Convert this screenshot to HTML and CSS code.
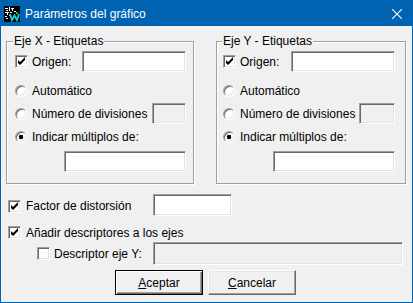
FILE: index.html
```html
<!DOCTYPE html>
<html lang="es">
<head>
  <meta charset="UTF-8">
  <meta name="viewport" content="width=device-width, initial-scale=1.0">
  <title>Parámetros del gráfico</title>
<link rel="stylesheet" href="styles.css">
</head>
<body>
  <div class="window">
    <div class="titlebar">
      <svg class="app-icon" width="16" height="16" viewBox="0 0 16 16">
        <rect width="16" height="16" fill="#000"/>
        <path d="M1 2h3v1H1zM5 1h1v4H5zM2 4h2v1H2zM7 2h3v1H7zM8 3h1v2H8zM1 6h4v1H1zM3 7h1v2H3zM6 6h2v1H6zM10 5h2v1h-2zM1 10h2v1H1zM2 12h2v1H2zM5 9h1v1H5z" fill="#fff"/>
        <path d="M6 8l2 6 2.5-4.5L13 14l2-6" fill="none" stroke="#19c8d2" stroke-width="2"/>
        <path d="M12 6h2v2h-2z" fill="#2fb84a"/>
      </svg>
      <span class="title">Parámetros del gráfico</span>
      <svg class="close" width="10" height="10" viewBox="0 0 10 10">
        <path d="M0 0L10 10M10 0L0 10" stroke="#fff" stroke-width="1.1"/>
      </svg>
    </div>

    <div class="client">
      <div class="groups">
        <div class="group group-x">
          <div class="caption">Eje X - Etiquetas</div>
          <div class="row row-origin">
            <span class="chk"><svg viewBox="1 1 11 11" width="11" height="11"><path d="M3 5L5 7L10 2V5L5 10L3 8Z" fill="#000"/></svg></span>
            <span class="lbl">Origen:</span>
            <input type="text" class="field w-origin">
          </div>
          <div class="row row-auto">
            <span class="radio"></span>
            <span class="lbl">Automático</span>
          </div>
          <div class="row row-div">
            <span class="radio"></span>
            <span class="lbl">Número de divisiones</span>
            <input type="text" class="field w-small" disabled>
          </div>
          <div class="row row-mult">
            <span class="radio on"></span>
            <span class="lbl">Indicar múltiplos de:</span>
          </div>
          <div class="row row-value">
            <input type="text" class="field w-wide">
          </div>
        </div>

        <div class="group group-y">
          <div class="caption">Eje Y - Etiquetas</div>
          <div class="row row-origin">
            <span class="chk"><svg viewBox="1 1 11 11" width="11" height="11"><path d="M3 5L5 7L10 2V5L5 10L3 8Z" fill="#000"/></svg></span>
            <span class="lbl">Origen:</span>
            <input type="text" class="field w-origin">
          </div>
          <div class="row row-auto">
            <span class="radio"></span>
            <span class="lbl">Automático</span>
          </div>
          <div class="row row-div">
            <span class="radio"></span>
            <span class="lbl">Número de divisiones</span>
            <input type="text" class="field w-small-y" disabled>
          </div>
          <div class="row row-mult">
            <span class="radio on"></span>
            <span class="lbl">Indicar múltiplos de:</span>
          </div>
          <div class="row row-value">
            <input type="text" class="field w-wide">
          </div>
        </div>
      </div>

      <div class="options">
        <div class="row opt-factor">
          <div class="opt-label">
            <span class="chk"><svg viewBox="1 1 11 11" width="11" height="11"><path d="M3 5L5 7L10 2V5L5 10L3 8Z" fill="#000"/></svg></span>
            <span class="lbl">Factor de distorsión</span>
          </div>
          <input type="text" class="field w-factor">
        </div>
        <div class="row opt-axes">
          <span class="chk"><svg viewBox="1 1 11 11" width="11" height="11"><path d="M3 5L5 7L10 2V5L5 10L3 8Z" fill="#000"/></svg></span>
          <span class="lbl">Añadir descriptores a los ejes</span>
        </div>
        <div class="row opt-desc">
          <div class="desc-label">
            <span class="chk"></span>
            <span class="lbl">Descriptor eje Y:</span>
          </div>
          <input type="text" class="field w-desc" disabled>
        </div>
      </div>

      <div class="buttons">
        <button type="button" class="btn btn-default"><u>A</u>ceptar</button>
        <button type="button" class="btn"><u>C</u>ancelar</button>
      </div>
    </div>
  </div>
</body>
</html>
```

FILE: styles.css
```css
body {
  margin: 0;
  font-family: "Liberation Sans", Arial, sans-serif;
  font-size: 12px;
  color: #000;
}

.window {
  width: 413px;
  height: 303px;
  box-sizing: border-box;
  border: 1px solid #0063b1;
  display: flex;
  flex-direction: column;
  background-color: #f0f0f0;
}

/* title bar */
.titlebar {
  flex: none;
  height: 25px;
  background-color: #0063b1;
  color: #fff;
  display: flex;
  align-items: center;
  padding-left: 3px;
}

.app-icon {
  display: block;
  margin-top: 1px;
}

.title {
  margin-left: 5px;
  font-size: 12px;
}

.close {
  display: block;
  margin-left: auto;
  margin-right: 10px;
}

.client {
  flex: 1;
  background-color: #f0f0f0;
}

/* group boxes */
.groups {
  display: flex;
  gap: 22px;
  padding-left: 5px;
}

.group {
  margin-top: 15px;
  height: 143px;
  box-sizing: border-box;
  border: 1px solid #a0a0a0;
  box-shadow: inset 1px 1px 0 #fff, 1px 1px 0 #fff;
}

.group-x {
  width: 188px;
  padding: 0 7px 0 8px;
}

.group-y {
  width: 190px;
  padding: 0 10px 0 6px;
}

.caption {
  width: fit-content;
  margin: -8px 0 0 -1px;
  padding: 0 1px;
  line-height: 14px;
  background-color: #f0f0f0;
}

.group-x .caption {
  margin-left: -2px;
}

.row {
  display: flex;
  align-items: center;
}

.lbl {
  white-space: nowrap;
}

.row-origin {
  margin-top: 3px;
  height: 21px;
}

.row-auto {
  margin-top: 9px;
  height: 20px;
}

.row-div {
  margin-top: 2px;
  height: 21px;
}

.row-mult {
  margin-top: 3px;
  height: 20px;
}

.row-value {
  margin-top: 4px;
  height: 21px;
  justify-content: flex-end;
}

/* classic controls */
.chk {
  flex: none;
  width: 13px;
  height: 13px;
  box-sizing: border-box;
  border: 1px solid;
  border-color: #a0a0a0 #fff #fff #a0a0a0;
  box-shadow: inset 1px 1px 0 #696969, inset -1px -1px 0 #e3e3e3;
  background-color: #fff;
  margin-right: 4px;
}

.chk svg {
  display: block;
}

.radio {
  flex: none;
  width: 12px;
  height: 12px;
  box-sizing: border-box;
  border-radius: 50%;
  border: 1px solid;
  border-color: #a0a0a0 #fff #fff #a0a0a0;
  box-shadow: inset 1px 1px 0 #696969, inset -1px -1px 0 #e3e3e3;
  background-color: #fff;
  margin-right: 5px;
}

.radio.on {
  background: radial-gradient(circle, #000 0 2px, #fff 2.6px);
}

.field {
  box-sizing: border-box;
  height: 21px;
  margin: 0 0 0 auto;
  padding: 0 3px;
  border: 1px solid;
  border-color: #a0a0a0 #fff #fff #a0a0a0;
  box-shadow: inset 1px 1px 0 #696969, inset -1px -1px 0 #e3e3e3;
  background-color: #fff;
  font: inherit;
  outline: none;
}

.field:disabled {
  background-color: #f0f0f0;
}

.w-origin {
  width: 104px;
}

.w-small {
  width: 34px;
}

.w-small-y {
  width: 36px;
}

.w-wide {
  width: 122px;
}

/* lower options */
.options {
  padding: 0 9px 0 7px;
}

.opt-factor {
  margin-top: 10px;
  height: 22px;
}

.opt-factor .chk,
.opt-axes .chk {
  margin-right: 5px;
}

.opt-label {
  width: 145px;
  display: flex;
  align-items: center;
  margin-top: 2px;
}

.w-factor {
  width: 79px;
  height: 22px;
  margin-left: 0;
}

.opt-axes {
  margin-top: 7px;
  height: 19px;
}

.opt-desc {
  height: 23px;
  padding-left: 29px;
}

.desc-label {
  width: 116px;
  display: flex;
  align-items: center;
}

.w-desc {
  flex: 1;
  height: 23px;
  margin-left: 0;
}

/* buttons */
.buttons {
  margin-top: 5px;
  display: flex;
  justify-content: center;
  gap: 5px;
  padding-right: 2px;
}

.btn {
  width: 88px;
  height: 25px;
  box-sizing: border-box;
  padding: 0;
  font: inherit;
  color: #000;
  background-color: #f0f0f0;
  border: 1px solid;
  border-color: #fff #696969 #696969 #fff;
  box-shadow: inset -1px -1px 0 #a0a0a0, inset 1px 1px 0 #e3e3e3;
}

.btn-default {
  border-color: #000;
  box-shadow: inset 1px 1px 0 #fff, inset -1px -1px 0 #696969, inset -2px -2px 0 #a0a0a0;
}
```
